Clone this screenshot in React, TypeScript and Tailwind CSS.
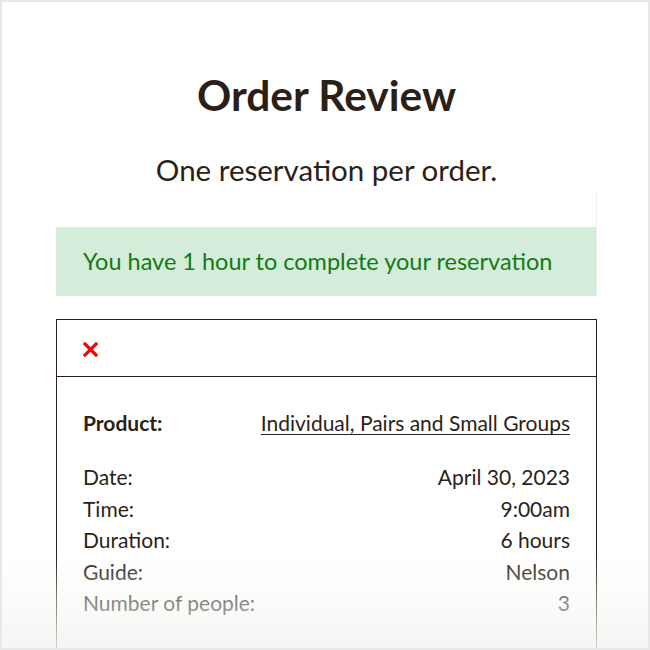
import React from 'react';

const rows = [
  { label: 'Date:', value: 'April 30, 2023' },
  { label: 'Time:', value: '9:00am' },
  { label: 'Duration:', value: '6 hours' },
  { label: 'Guide:', value: 'Nelson' },
  { label: 'Number of people:', value: '3' },
];

export default function App() {
  return (
    <div className="relative w-[650px] h-[650px] overflow-hidden bg-white border-2 border-[#e8e8e8] text-[#2b1f17] font-['Lato',sans-serif]">
      <div className="pl-[54px] pr-[51px]">
        <h1 className="pt-[69px] text-center text-[42.5px] leading-[48px] font-bold">Order Review</h1>
        <p className="mt-[33px] text-center text-[29.5px] leading-[36px]">One reservation per order.</p>

        <div className="mt-[3px] border-r border-[#eef4f0] pt-[36px]">
          <div className="h-[69px] bg-[#d4edda] px-[27px] flex items-center text-[23.5px] text-[#137a13]">
            You have 1 hour to complete your reservation
          </div>
        </div>

        <div className="mt-[23px] border border-[#2b1f17]">
          <div className="h-[57px] border-b border-[#2b1f17] px-[26px] pt-[2px] flex items-center">
            <svg width="15" height="15" viewBox="0 0 15 15">
              <path d="M2 2 L13 13 M13 2 L2 13" stroke="#ff0000" strokeWidth="3.2" strokeLinecap="square" />
            </svg>
          </div>
          <div className="px-[26px] pt-[30px] pb-[40px] text-[21px]">
            <div className="flex justify-between items-center h-[32px]">
              <span className="font-bold">Product:</span>
              <a className="underline underline-offset-[3px] decoration-1">Individual, Pairs and Small Groups</a>
            </div>
            <div className="mt-[22px] flex flex-col">
              {rows.map((r) => (
                <div key={r.label} className="flex justify-between items-center h-[31.5px]">
                  <span>{r.label}</span>
                  <span>{r.value}</span>
                </div>
              ))}
            </div>
          </div>
        </div>
      </div>
      <div className="absolute left-0 right-0 bottom-0 h-[95px] bg-gradient-to-b from-white/0 via-[#f7f7f5]/45 to-[#f3f3f1]/85" />
    </div>
  );
}
